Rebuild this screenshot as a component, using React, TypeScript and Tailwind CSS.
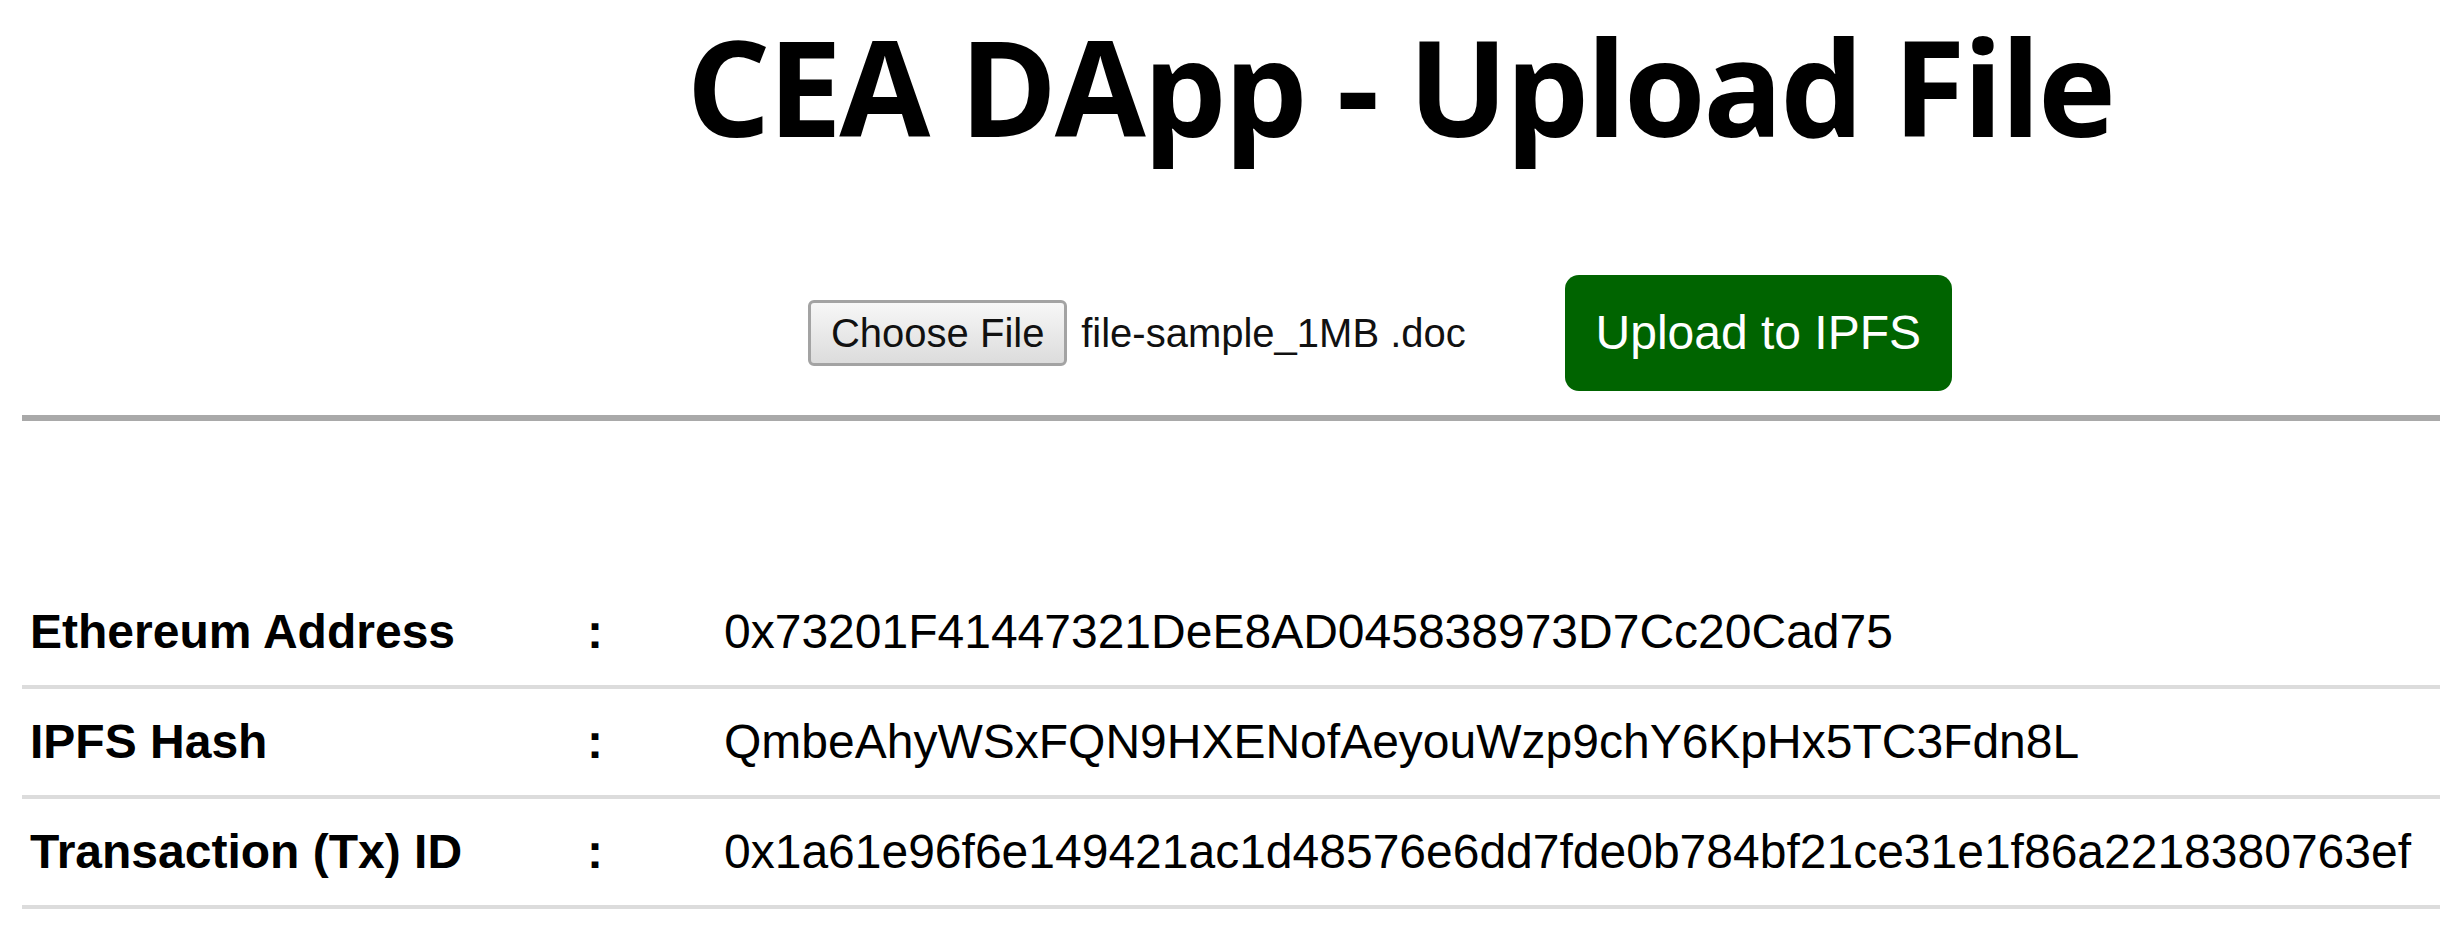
import React from "react";

interface InfoRow {
    label: string;
    value: string;
}

const rows: InfoRow[] = [
    { label: "Ethereum Address", value: "0x73201F41447321DeE8AD045838973D7Cc20Cad75" },
    { label: "IPFS Hash", value: "QmbeAhyWSxFQN9HXENofAeyouWzp9chY6KpHx5TC3Fdn8L" },
    { label: "Transaction (Tx) ID", value: "0x1a61e96f6e149421ac1d48576e6dd7fde0b784bf21ce31e1f86a2218380763ef" },
];

const App: React.FC = () => {
    return (
        <div className="bg-white px-[22px] text-black font-['Liberation_Sans',Arial,sans-serif]">
            {/* title, pushed a bit right like the original page */}
            <div className="pl-[338px] text-center">
                <h1 className="mt-[20px] text-[132px] leading-none font-bold font-['Open_Sans',sans-serif] tracking-[-2.6px]">
                    CEA DApp - Upload File
                </h1>
            </div>

            {/* upload form */}
            <div className="mt-[123px] pl-[298px] flex items-center justify-center">
                <label className="flex items-center cursor-pointer">
                    <span className="h-[66px] w-[259px] flex items-center justify-center rounded-[6px] border-[3px] border-[#a3a3a3] bg-gradient-to-b from-[#f7f7f7] to-[#dcdcdc] text-[40px] text-[#111]">
                        Choose File
                    </span>
                    <span className="ml-[14px] text-[40px] text-[#111]">file-sample_1MB .doc</span>
                </label>
                <button className="ml-[99px] h-[116px] w-[387px] rounded-[14px] bg-[#006400] text-[48px] text-white">
                    Upload to IPFS
                </button>
            </div>

            <hr className="mt-[24px] h-[6px] border-0 bg-[#a9a9a9]" />

            {/* result table */}
            <div className="mt-[158px]">
                {rows.map((row) => (
                    <div
                        key={row.label}
                        className="grid grid-cols-[557px_137px_1fr] items-center h-[110px] border-b-4 border-[#dcdcdc] text-[48px]"
                    >
                        <div className="px-2 font-bold">{row.label}</div>
                        <div className="px-2 font-bold">:</div>
                        <div className="px-2 whitespace-nowrap">{row.value}</div>
                    </div>
                ))}
            </div>
        </div>
    );
};

export default App;
